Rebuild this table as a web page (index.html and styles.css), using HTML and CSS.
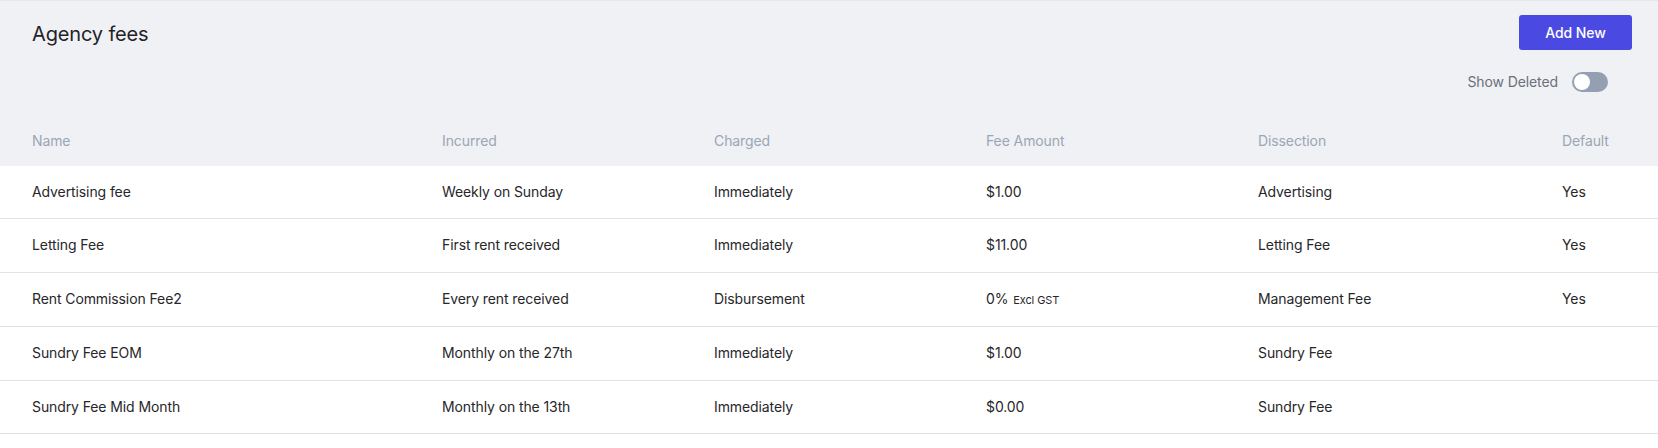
FILE: index.html
```html
<!DOCTYPE html>
<html lang="en">
<head>
<meta charset="utf-8">
<title>Agency fees</title>
<link rel="stylesheet" href="styles.css">
</head>
<body>
<div class="page">
  <div class="page-head">
    <div class="head-row">
      <h1 class="title">Agency fees</h1>
      <button class="btn-primary" type="button">Add New</button>
    </div>
    <div class="toolbar">
      <span class="toggle-label">Show Deleted</span>
      <span class="toggle"><span class="knob"></span></span>
    </div>
  </div>
  <table class="fees">
    <colgroup>
      <col class="c-name"><col class="c-inc"><col class="c-chg"><col class="c-amt"><col class="c-dis"><col class="c-def">
    </colgroup>
    <thead>
      <tr><th>Name</th><th>Incurred</th><th>Charged</th><th>Fee Amount</th><th>Dissection</th><th>Default</th></tr>
    </thead>
    <tbody>
      <tr><td>Advertising fee</td><td>Weekly on Sunday</td><td>Immediately</td><td>$1.00</td><td>Advertising</td><td>Yes</td></tr>
      <tr><td>Letting Fee</td><td>First rent received</td><td>Immediately</td><td>$11.00</td><td>Letting Fee</td><td>Yes</td></tr>
      <tr><td>Rent Commission Fee2</td><td>Every rent received</td><td>Disbursement</td><td>0% <span class="note">Excl GST</span></td><td>Management Fee</td><td>Yes</td></tr>
      <tr><td>Sundry Fee EOM</td><td>Monthly on the 27th</td><td>Immediately</td><td>$1.00</td><td>Sundry Fee</td><td></td></tr>
      <tr><td>Sundry Fee Mid Month</td><td>Monthly on the 13th</td><td>Immediately</td><td>$0.00</td><td>Sundry Fee</td><td></td></tr>
    </tbody>
  </table>
</div>
</body>
</html>
```

FILE: styles.css
```css
* { box-sizing: border-box; }
html, body { margin: 0; padding: 0; background: #ffffff; }
body {
  font-family: Inter, "Noto Sans", "Liberation Sans", sans-serif;
  font-size: 14px;
  letter-spacing: -0.1px;
  color: #27272a;
}
.page {
  border-top: 1px solid #e4e6eb;
}
.page-head {
  background: #f0f1f5;
  padding: 14px 26px 0 32px;
}
.head-row {
  display: flex;
  justify-content: space-between;
  align-items: flex-start;
}
.title {
  margin: 5px 0 0 0;
  font-size: 20px;
  line-height: 28px;
  font-weight: 400;
  letter-spacing: -0.15px;
  color: #1f2328;
}
.btn-primary {
  width: 113px;
  height: 35px;
  border: none;
  border-radius: 3px;
  background: #4a4ae2;
  color: #ffffff;
  font-family: inherit;
  font-size: 14px;
  font-weight: 500;
  letter-spacing: -0.1px;
  padding: 0;
}
.toolbar {
  display: flex;
  justify-content: flex-end;
  align-items: center;
  gap: 14px;
  margin-top: 22px;
  padding-right: 24px;
  height: 20px;
}
.toggle-label {
  color: #6b7078;
  font-size: 14px;
  line-height: 20px;
}
.toggle {
  position: relative;
  width: 36px;
  height: 20px;
  border-radius: 10px;
  background: #94a0b2;
}
.knob {
  position: absolute;
  left: 2px;
  top: 2px;
  width: 16px;
  height: 16px;
  border-radius: 50%;
  background: #ffffff;
}
.fees {
  width: 100%;
  border-collapse: collapse;
  table-layout: fixed;
}
.c-name { width: 442px; }
.c-inc { width: 272px; }
.c-chg { width: 272px; }
.c-amt { width: 272px; }
.c-dis { width: 304px; }
.fees th {
  background: #f0f1f5;
  text-align: left;
  font-weight: 400;
  color: #9aa6b6;
  font-size: 14px;
  line-height: 20px;
  padding: 39px 0 15px 0;
}
.fees td {
  padding: 16px 0;
  line-height: 20.4px;
  border-bottom: 1px solid #e2e3e6;
  white-space: nowrap;
}
.fees th:first-child, .fees td:first-child { padding-left: 32px; }
.note {
  font-size: 11px;
  margin-left: 1px;
}
```
